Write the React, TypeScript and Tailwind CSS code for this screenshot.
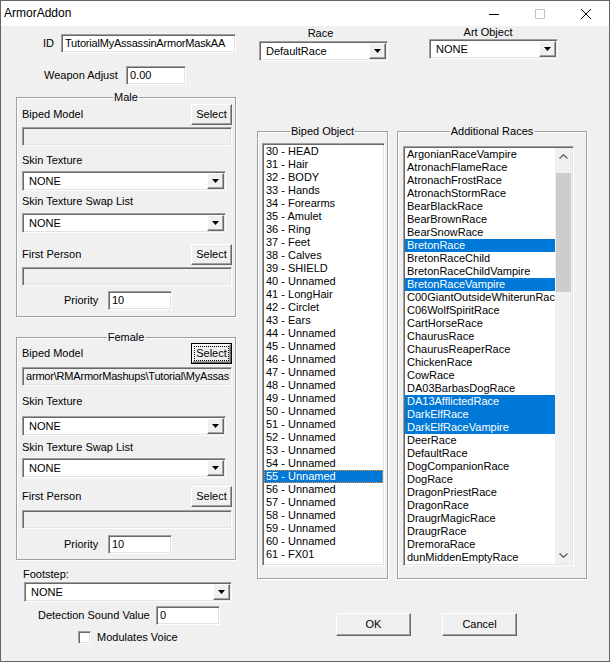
import React from "react";

const sunken =
  "border border-t-[#a0a0a0] border-l-[#a0a0a0] border-b-white border-r-white shadow-[inset_1px_1px_0_#696969,inset_-1px_-1px_0_#e3e3e3]";
const raised =
  "border border-t-white border-l-white border-b-[#696969] border-r-[#696969] shadow-[inset_-1px_-1px_0_#a0a0a0] bg-[#f0f0f0]";

const bipedParts = [
  "30 - HEAD", "31 - Hair", "32 - BODY", "33 - Hands", "34 - Forearms", "35 - Amulet",
  "36 - Ring", "37 - Feet", "38 - Calves", "39 - SHIELD", "40 - Unnamed", "41 - LongHair",
  "42 - Circlet", "43 - Ears", "44 - Unnamed", "45 - Unnamed", "46 - Unnamed", "47 - Unnamed",
  "48 - Unnamed", "49 - Unnamed", "50 - Unnamed", "51 - Unnamed", "52 - Unnamed", "53 - Unnamed",
  "54 - Unnamed", "55 - Unnamed", "56 - Unnamed", "57 - Unnamed", "58 - Unnamed", "59 - Unnamed",
  "60 - Unnamed", "61 - FX01",
];

const races = [
  "ArgonianRaceVampire", "AtronachFlameRace", "AtronachFrostRace", "AtronachStormRace",
  "BearBlackRace", "BearBrownRace", "BearSnowRace", "BretonRace", "BretonRaceChild",
  "BretonRaceChildVampire", "BretonRaceVampire", "C00GiantOutsideWhiterunRace",
  "C06WolfSpiritRace", "CartHorseRace", "ChaurusRace", "ChaurusReaperRace", "ChickenRace",
  "CowRace", "DA03BarbasDogRace", "DA13AfflictedRace", "DarkElfRace", "DarkElfRaceVampire",
  "DeerRace", "DefaultRace", "DogCompanionRace", "DogRace", "DragonPriestRace", "DragonRace",
  "DraugrMagicRace", "DraugrRace", "DremoraRace", "dunMiddenEmptyRace",
];
const pickedRaces = ["BretonRace", "BretonRaceVampire", "DA13AfflictedRace", "DarkElfRace", "DarkElfRaceVampire"];

function Edit({ value, className, disabled }: { value?: string; className: string; disabled?: boolean }) {
  return (
    <div
      className={`${sunken} ${disabled ? "bg-[#f0f0f0]" : "bg-white"} h-[19px] flex items-center pl-[3px] overflow-hidden whitespace-nowrap ${className}`}
    >
      {value}
    </div>
  );
}

function Combo({ value, className }: { value: string; className: string }) {
  return (
    <div className={`${sunken} bg-white h-[20px] flex items-center p-[1px] ${className}`}>
      <span className="flex-1 pl-[5px] whitespace-nowrap overflow-hidden">{value}</span>
      <div className={`${raised} w-[17px] h-full flex items-center justify-center`}>
        <svg width="7" height="4" viewBox="0 0 7 4">
          <path d="M0 0h7L3.5 4z" fill="#000" />
        </svg>
      </div>
    </div>
  );
}

function Button({ label, className }: { label: string; className: string }) {
  return <div className={`${raised} flex items-center justify-center ${className}`}>{label}</div>;
}

function Group({ title, className, children }: { title: string; className: string; children: React.ReactNode }) {
  return (
    <div className={`relative flex flex-col border border-[#a0a0a0] shadow-[inset_1px_1px_0_#fff,1px_1px_0_#fff] ${className}`}>
      <span className="absolute left-1/2 top-[-7px] -translate-x-1/2 bg-[#f0f0f0] px-[1px] whitespace-nowrap">
        {title}
      </span>
      {children}
    </div>
  );
}

function Chevron({ up }: { up?: boolean }) {
  return (
    <svg width="9" height="5" viewBox="0 0 9 5">
      <path d={up ? "M0.5 4.5L4.5 0.8L8.5 4.5" : "M0.5 0.5L4.5 4.2L8.5 0.5"} fill="none" stroke="#606060" strokeWidth="1.4" />
    </svg>
  );
}

export default function App() {
  return (
    <div className="w-[610px] h-[662px] border border-[#646464] bg-[#f0f0f0] flex flex-col font-['Liberation_Sans',Arial,sans-serif] text-[11px] leading-[13px] text-black overflow-hidden">
      {/* title bar */}
      <div className="h-[25px] bg-white flex items-center shrink-0">
        <span className="pl-[3px] text-[12px]">ArmorAddon</span>
        <div className="ml-auto flex h-full">
          <div className="w-[46px] flex items-center justify-center">
            <svg width="10" height="10" viewBox="0 0 10 10">
              <path d="M0 5.5h10" stroke="#000" strokeWidth="1" />
            </svg>
          </div>
          <div className="w-[46px] flex items-center justify-center">
            <svg width="10" height="10" viewBox="0 0 10 10">
              <rect x="0.5" y="0.5" width="9" height="9" fill="none" stroke="#c4c4c4" />
            </svg>
          </div>
          <div className="w-[46px] flex items-center justify-center">
            <svg width="10" height="10" viewBox="0 0 10 10">
              <path d="M0 0L10 10M10 0L0 10" stroke="#000" strokeWidth="1" />
            </svg>
          </div>
        </div>
      </div>

      {/* body */}
      <div className="flex-1 flex">
        {/* left column */}
        <div className="ml-[15px] w-[220px] flex flex-col">
          <div className="mt-[8px] h-[19px] flex items-center">
            <span className="ml-[27px] w-[18px]">ID</span>
            <Edit value="TutorialMyAssassinArmorMaskAA" className="w-[175px] tracking-[-0.2px]" />
          </div>
          <div className="mt-[13px] h-[19px] flex items-center">
            <span className="ml-[28px] w-[82px]">Weapon Adjust</span>
            <Edit value="0.00" className="w-[60px]" />
          </div>

          <Group title="Male" className="mt-[12px] pb-[6px]">
            <div className="mt-[6px] h-[21px] pl-[5px] pr-[3px] flex items-center justify-between">
              <span>Biped Model</span>
              <Button label="Select" className="w-[41px] h-[21px]" />
            </div>
            <Edit disabled className="mt-[2px] ml-[5px] w-[210px]" />
            <span className="mt-[8px] ml-[5px] h-[13px]">Skin Texture</span>
            <Combo value="NONE" className="mt-[4px] ml-[5px] w-[204px]" />
            <span className="mt-[4px] ml-[5px] h-[13px]">Skin Texture Swap List</span>
            <Combo value="NONE" className="mt-[5px] ml-[5px] w-[204px]" />
            <div className="mt-[11px] h-[21px] pl-[5px] pr-[3px] flex items-center justify-between">
              <span>First Person</span>
              <Button label="Select" className="w-[41px] h-[21px]" />
            </div>
            <Edit disabled className="mt-[2px] ml-[5px] w-[210px]" />
            <div className="mt-[5px] h-[19px] flex items-center">
              <span className="ml-[47px] w-[44px]">Priority</span>
              <Edit value="10" className="w-[64px]" />
            </div>
          </Group>

          <Group title="Female" className="mt-[20px] pb-[5px]">
            <div className="mt-[5px] h-[21px] pl-[5px] pr-[3px] flex items-center justify-between">
              <span>Biped Model</span>
              <div className="w-[41px] h-[21px] border border-black">
                <div className={`${raised} w-full h-full flex items-center justify-center`}>
                  <span className="outline-1 outline-dotted outline-black outline-offset-[1px] leading-[11px]">Select</span>
                </div>
              </div>
            </div>
            <Edit
              disabled
              value={"armor\\RMArmorMashups\\Tutorial\\MyAssas"}
              className="mt-[3px] ml-[5px] w-[210px] tracking-[-0.2px]"
            />
            <span className="mt-[9px] ml-[5px] h-[13px]">Skin Texture</span>
            <Combo value="NONE" className="mt-[8px] ml-[5px] w-[204px]" />
            <span className="mt-[5px] ml-[5px] h-[13px]">Skin Texture Swap List</span>
            <Combo value="NONE" className="mt-[4px] ml-[5px] w-[204px]" />
            <div className="mt-[8px] h-[21px] pl-[5px] pr-[3px] flex items-center justify-between">
              <span>First Person</span>
              <Button label="Select" className="w-[41px] h-[21px]" />
            </div>
            <Edit disabled className="mt-[3px] ml-[5px] w-[210px]" />
            <div className="mt-[6px] h-[19px] flex items-center">
              <span className="ml-[47px] w-[44px]">Priority</span>
              <Edit value="10" className="w-[64px]" />
            </div>
          </Group>

          <span className="mt-[8px] ml-[7px] h-[13px]">Footstep:</span>
          <Combo value="NONE" className="mt-[1px] ml-[8px] w-[208px]" />
          <div className="mt-[4px] h-[19px] flex items-center">
            <span className="ml-[22px] w-[118px] whitespace-nowrap">Detection Sound Value</span>
            <Edit value="0" className="w-[64px]" />
          </div>
          <div className="mt-[6px] h-[13px] flex items-center">
            <div className={`${sunken} ml-[62px] w-[13px] h-[13px] bg-white`} />
            <span className="ml-[6px]">Modulates Voice</span>
          </div>
        </div>

        {/* middle + right */}
        <div className="ml-[21px] flex flex-col">
          <div className="flex">
            {/* race / biped object */}
            <div className="w-[131px] flex flex-col">
              <span className="mt-[1px] w-[127px] h-[13px] text-center">Race</span>
              <Combo value="DefaultRace" className="mt-[1px] ml-[2px] w-[129px]" />
              <Group title="Biped Object" className="mt-[70px] pb-[12px]">
                <div className={`${sunken} bg-white mt-[11px] ml-[4px] w-[123px] h-[423px] p-[1px] flex flex-col overflow-hidden`}>
                  {bipedParts.map((part) => (
                    <div
                      key={part}
                      className={
                        part === "55 - Unnamed"
                          ? "h-[13px] shrink-0 pl-[2px] whitespace-nowrap bg-[#0078d7] text-white outline-1 outline-dotted outline-[#ff8c28] -outline-offset-1"
                          : "h-[13px] shrink-0 pl-[2px] whitespace-nowrap"
                      }
                    >
                      {part}
                    </div>
                  ))}
                </div>
              </Group>
            </div>

            {/* art object / additional races */}
            <div className="ml-[9px] w-[190px] flex flex-col">
              <span className="ml-[32px] w-[118px] h-[13px] text-center">Art Object</span>
              <Combo value="NONE" className="ml-[32px] w-[129px]" />
              <Group title="Additional Races" className="mt-[72px] pb-[12px]">
                <div className={`${sunken} bg-white mt-[14px] ml-[5px] w-[171px] h-[420px] p-[1px] flex overflow-hidden`}>
                  <div className="flex-1 flex flex-col overflow-hidden">
                    {races.map((race) => (
                      <div
                        key={race}
                        className={
                          pickedRaces.includes(race)
                            ? "h-[13px] shrink-0 pl-[2px] whitespace-nowrap bg-[#0078d7] text-white"
                            : "h-[13px] shrink-0 pl-[2px] whitespace-nowrap"
                        }
                      >
                        {race}
                      </div>
                    ))}
                  </div>
                  <div className="w-[17px] bg-[#f0f0f0] flex flex-col">
                    <div className="h-[17px] flex items-center justify-center">
                      <Chevron up />
                    </div>
                    <div className="flex-1 pt-[8px]">
                      <div className="mx-[1px] h-[119px] bg-[#cdcdcd]" />
                    </div>
                    <div className="h-[17px] flex items-center justify-center">
                      <Chevron />
                    </div>
                  </div>
                </div>
              </Group>
            </div>
          </div>

          <div className="mt-[34px] flex">
            <Button label="OK" className="ml-[79px] w-[75px] h-[23px]" />
            <Button label="Cancel" className="ml-[31px] w-[75px] h-[23px]" />
          </div>
        </div>
      </div>
    </div>
  );
}
